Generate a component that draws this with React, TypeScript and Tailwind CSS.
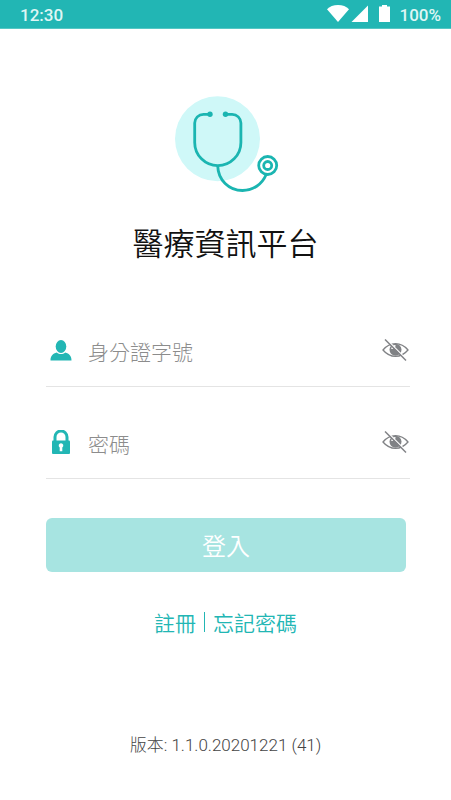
import { useState } from "react";

function StatusBar() {
  return (
    <header className="box-content flex h-7 items-center justify-between border-b border-[#55c7c4] bg-[#22b6b4] pl-5 pr-2.5 font-['Roboto',sans-serif] text-[17px] font-medium leading-7 text-[#dff6f5]">
      <span className="pt-0.5">12:30</span>
      <div className="flex items-center gap-2">
        <svg width="64" height="20" viewBox="327 5 64 20" fill="#fff" aria-hidden="true">
          <path d="M327 10.200C329.500 7.600 333.500 6 338 6s8.500 1.600 11 4.200L338 23z" />
          <path d="M368 6.500V23H351.500z" />
          <path d="M379 7.500h3V6h5v1.500h3V23H379z" />
        </svg>
        <span className="pt-0.5">100%</span>
      </div>
    </header>
  );
}

function Logo() {
  return (
    <svg width="108" height="100" viewBox="172 94 108 100" fill="none" aria-hidden="true">
      <circle cx="217.500" cy="138.700" r="42.500" fill="#cff8f8" />
      <g stroke="#1bb5b1" strokeWidth="2.800">
        <path d="M210 114.300h-6.500a8.800 8.800 0 0 0-8.800 8.800V142.500a23.100 23.100 0 0 0 46.200 0V123.100a8.800 8.800 0 0 0-8.800-8.800H225.500" />
        <path d="M217.700 165.600C218 180 229 190.500 242.500 190.500C253 190.500 262 184.500 266.200 174.500" />
        <circle cx="267.700" cy="165.500" r="9" fill="#fff" />
        <circle cx="267.700" cy="165.500" r="4" />
      </g>
      <circle cx="210" cy="114.300" r="2.700" fill="#1bb5b1" />
      <circle cx="225.500" cy="114.300" r="2.700" fill="#1bb5b1" />
    </svg>
  );
}

function UserIcon() {
  return (
    <svg width="22" height="24" viewBox="0 0 22 24" fill="#22b6b4" aria-hidden="true">
      <ellipse cx="11" cy="7.500" rx="5.300" ry="6.500" />
      <path d="M.5 21.500c0-4.800 2.300-6.800 6.300-8 1.200 1 2.700 1.500 4.200 1.500s3-.5 4.200-1.500c4 1.200 6.300 3.200 6.300 8z" />
    </svg>
  );
}

function LockIcon() {
  return (
    <svg width="22" height="26" viewBox="0 0 22 26" aria-hidden="true">
      <path d="M5 12V7a6 6 0 0 1 12 0v5" fill="none" stroke="#22b6b4" strokeWidth="3" />
      <rect x="2" y="10.500" width="18" height="13.500" rx="1" fill="#22b6b4" />
      <path d="M11 13.200a2.300 2.300 0 0 1 1.300 4.200v3.800H9.700v-3.800A2.300 2.300 0 0 1 11 13.200z" fill="#fff" />
    </svg>
  );
}

function EyeOffIcon() {
  return (
    <svg width="28" height="24" viewBox="0 0 28 24" fill="none" aria-hidden="true">
      <path d="M1 11C4.500 6.800 8.700 4.700 13.500 4.700S22.500 6.800 26 11C22.500 15.200 18.300 17.300 13.500 17.300S4.500 15.200 1 11z" stroke="#808285" strokeWidth="1.300" />
      <circle cx="13.500" cy="10.800" r="6" fill="#808285" />
      <path d="M10 10a3.800 3.800 0 0 1 3.500-3.300" stroke="#fff" strokeWidth="1.600" />
      <path d="M4.200 .2L25 21" stroke="#fff" strokeWidth="1.500" />
      <path d="M3 .5L24 21.500" stroke="#808285" strokeWidth="1.500" />
    </svg>
  );
}

function Field({
  id,
  label,
  icon,
  value,
  onChange,
}: {
  id: string;
  label: string;
  icon: React.ReactNode;
  value: string;
  onChange: (v: string) => void;
}) {
  const [visible, setVisible] = useState(false);

  return (
    <div className="flex h-[72px] items-center border-b border-[#e4e4e4] pl-1">
      <label htmlFor={id} aria-label={label} className="mr-4 flex w-[22px] shrink-0 justify-center">
        {icon}
      </label>
      <input
        id={id}
        type={visible ? "text" : "password"}
        value={value}
        onChange={(e) => onChange(e.target.value)}
        placeholder={label}
        className="min-w-0 flex-1 bg-transparent pt-0.5 text-[21px] font-light text-[#444] outline-none placeholder:text-[#8c8c8c]"
      />
      <button type="button" aria-label="顯示" onClick={() => setVisible((v) => !v)} className="shrink-0 cursor-pointer">
        <EyeOffIcon />
      </button>
    </div>
  );
}

export default function App() {
  const [account, setAccount] = useState("");
  const [password, setPassword] = useState("");

  return (
    <div className="min-h-screen bg-white font-['Noto_Sans_CJK_TC',sans-serif]">
      <StatusBar />

      <main className="flex flex-col items-center pt-[65px]">
        <Logo />
        <h1 className="mt-5 text-[31px] font-[350] leading-[56px] text-[#111]">醫療資訊平台</h1>

        <form onSubmit={(e) => e.preventDefault()} className="mt-[45px] flex w-full flex-col gap-5 pl-[46px] pr-[41px]">
          <Field id="account" label="身分證字號" icon={<UserIcon />} value={account} onChange={setAccount} />
          <Field id="password" label="密碼" icon={<LockIcon />} value={password} onChange={setPassword} />
          <button
            type="submit"
            className="mr-1 mt-[19px] h-[54px] cursor-pointer rounded-md bg-[#a7e4e1] text-2xl font-[350] text-white"
          >
            登入
          </button>
        </form>

        <nav className="mt-[30px] flex items-center gap-2 text-[21px] font-[350] leading-10 text-[#22b6b4]">
          <a href="#register">註冊</a>
          <span className="h-5 w-px bg-[#22b6b4]" />
          <a href="#forgot">忘記密碼</a>
        </nav>

        <p className="mt-[87px] font-['Roboto','Noto_Sans_CJK_TC',sans-serif] text-[17px] font-light leading-8 text-[#444]">
          版本: 1.1.0.20201221 (41)
        </p>
      </main>
    </div>
  );
}
